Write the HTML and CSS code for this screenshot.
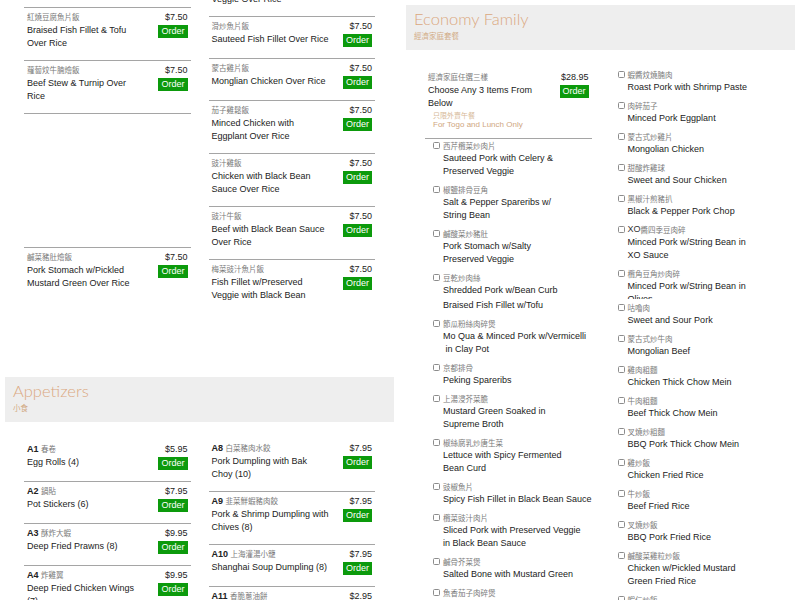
FILE: index.html
```html
<!DOCTYPE html>
<html lang="en">
<head>
<meta charset="utf-8">
<title>Menu</title>
<link rel="stylesheet" href="styles.css">
</head>
<body>
<div class="page">
  <div class="half">
    <section class="cat cont">
      <div class="cat-body">
        <div class="col">
          <div class="item"><div class="item-name"><span class="zh">蠔油牛肉燴飯</span><br>Beef with Oyster Sauce<br>Over Rice</div><div class="item-side"><span class="price">$7.50</span><button class="order">Order</button></div></div>
          <div class="item"><div class="item-name"><span class="zh">紅燒豆腐魚片飯</span><br>Braised Fish Fillet &amp; Tofu<br>Over Rice</div><div class="item-side"><span class="price">$7.50</span><button class="order">Order</button></div></div>
          <div class="item"><div class="item-name"><span class="zh">蘿蔔炆牛腩燴飯</span><br>Beef Stew &amp; Turnip Over<br>Rice</div><div class="item-side"><span class="price">$7.50</span><button class="order">Order</button></div></div>
          <div class="item blank"></div>
          <div class="item"><div class="item-name"><span class="zh">鹹菜豬肚燴飯</span><br>Pork Stomach w/Pickled<br>Mustard Green Over Rice</div><div class="item-side"><span class="price">$7.50</span><button class="order">Order</button></div></div>
        </div>
        <div class="col col-shift">
          <div class="item"><div class="item-name"><span class="zh">梅菜扣肉飯</span><br>Pork Belly w/Preserved<br>Veggie Over Rice</div><div class="item-side"><span class="price">$7.50</span><button class="order">Order</button></div></div>
          <div class="item"><div class="item-name"><span class="zh">滑炒魚片飯</span><br>Sauteed Fish Fillet Over Rice</div><div class="item-side"><span class="price">$7.50</span><button class="order">Order</button></div></div>
          <div class="item"><div class="item-name"><span class="zh">蒙古雞片飯</span><br>Monglian Chicken Over Rice</div><div class="item-side"><span class="price">$7.50</span><button class="order">Order</button></div></div>
          <div class="item"><div class="item-name"><span class="zh">茄子雞鬆飯</span><br>Minced Chicken with<br>Eggplant Over Rice</div><div class="item-side"><span class="price">$7.50</span><button class="order">Order</button></div></div>
          <div class="item"><div class="item-name"><span class="zh">豉汁雞飯</span><br>Chicken with Black Bean<br>Sauce Over Rice</div><div class="item-side"><span class="price">$7.50</span><button class="order">Order</button></div></div>
          <div class="item"><div class="item-name"><span class="zh">豉汁牛飯</span><br>Beef with Black Bean Sauce<br>Over Rice</div><div class="item-side"><span class="price">$7.50</span><button class="order">Order</button></div></div>
          <div class="item"><div class="item-name"><span class="zh">梅菜豉汁魚片飯</span><br>Fish Fillet w/Preserved<br>Veggie with Black Bean</div><div class="item-side"><span class="price">$7.50</span><button class="order">Order</button></div></div>
        </div>
      </div>
    </section>

    <section class="cat">
      <header class="cat-head">
        <h2 class="cat-title">Appetizers</h2>
        <div class="cat-sub">小食</div>
      </header>
      <div class="cat-body">
        <div class="col">
          <div class="item"><div class="item-name"><b class="code">A1</b> <span class="zh">春卷</span><br>Egg Rolls (4)</div><div class="item-side"><span class="price">$5.95</span><button class="order">Order</button></div></div>
          <div class="item"><div class="item-name"><b class="code">A2</b> <span class="zh">鍋貼</span><br>Pot Stickers (6)</div><div class="item-side"><span class="price">$7.95</span><button class="order">Order</button></div></div>
          <div class="item"><div class="item-name"><b class="code">A3</b> <span class="zh">酥炸大蝦</span><br>Deep Fried Prawns (8)</div><div class="item-side"><span class="price">$9.95</span><button class="order">Order</button></div></div>
          <div class="item"><div class="item-name"><b class="code">A4</b> <span class="zh">炸雞翼</span><br>Deep Fried Chicken Wings<br>(7)</div><div class="item-side"><span class="price">$9.95</span><button class="order">Order</button></div></div>
        </div>
        <div class="col col-up">
          <div class="item"><div class="item-name"><b class="code">A8</b> <span class="zh">白菜豬肉水餃</span><br>Pork Dumpling with Bak<br>Choy (10)</div><div class="item-side"><span class="price">$7.95</span><button class="order">Order</button></div></div>
          <div class="item"><div class="item-name"><b class="code">A9</b> <span class="zh">韭菜鮮蝦豬肉餃</span><br>Pork &amp; Shrimp Dumpling with<br>Chives (8)</div><div class="item-side"><span class="price">$7.95</span><button class="order">Order</button></div></div>
          <div class="item"><div class="item-name"><b class="code">A10</b> <span class="zh">上海灌湯小籠</span><br>Shanghai Soup Dumpling (8)</div><div class="item-side"><span class="price">$7.95</span><button class="order">Order</button></div></div>
          <div class="item"><div class="item-name"><b class="code">A11</b> <span class="zh">香脆蔥油餅</span><br>Scallion Pancake</div><div class="item-side"><span class="price">$2.95</span><button class="order">Order</button></div></div>
        </div>
      </div>
    </section>
  </div>

  <div class="half">
    <section class="cat">
      <header class="cat-head">
        <h2 class="cat-title">Economy Family</h2>
        <div class="cat-sub">經濟家庭套餐</div>
      </header>
      <div class="cat-body">
        <div class="col">
          <div class="item main">
            <div class="item-name"><span class="zh">經濟家庭任選三樣</span><br>Choose Any 3 Items From<br>Below
              <div class="note"><span class="zh">只限外賣午餐</span><br>For Togo and Lunch Only</div>
            </div>
            <div class="item-side"><span class="price">$28.95</span><button class="order">Order</button></div>
          </div>
          <div class="opt"><label class="opt-row"><input type="checkbox"><span class="zh">西芹欖菜炒肉片</span></label><div class="opt-en">Sauteed Pork with Celery &amp;<br>Preserved Veggie</div></div>
          <div class="opt"><label class="opt-row"><input type="checkbox"><span class="zh">椒鹽排骨豆角</span></label><div class="opt-en">Salt &amp; Pepper Spareribs w/<br>String Bean</div></div>
          <div class="opt"><label class="opt-row"><input type="checkbox"><span class="zh">鹹酸菜炒豬肚</span></label><div class="opt-en">Pork Stomach w/Salty<br>Preserved Veggie</div></div>
          <div class="opt"><label class="opt-row"><input type="checkbox"><span class="zh">豆乾炒肉絲</span></label><div class="opt-en">Shredded Pork w/Bean Curb</div><div class="opt-en extra">Braised Fish Fillet w/Tofu</div></div>
          <div class="opt"><label class="opt-row"><input type="checkbox"><span class="zh">節瓜粉絲肉碎煲</span></label><div class="opt-en">Mo Qua &amp; Minced Pork w/Vermicelli<br>&nbsp;in Clay Pot</div></div>
          <div class="opt"><label class="opt-row"><input type="checkbox"><span class="zh">京都排骨</span></label><div class="opt-en">Peking Spareribs</div></div>
          <div class="opt"><label class="opt-row"><input type="checkbox"><span class="zh">上湯浸芥菜膽</span></label><div class="opt-en">Mustard Green Soaked in<br>Supreme Broth</div></div>
          <div class="opt"><label class="opt-row"><input type="checkbox"><span class="zh">椒絲腐乳炒唐生菜</span></label><div class="opt-en">Lettuce with Spicy Fermented<br>Bean Curd</div></div>
          <div class="opt"><label class="opt-row"><input type="checkbox"><span class="zh">豉椒魚片</span></label><div class="opt-en">Spicy Fish Fillet in Black Bean Sauce</div></div>
          <div class="opt"><label class="opt-row"><input type="checkbox"><span class="zh">欖菜豉汁肉片</span></label><div class="opt-en">Sliced Pork with Preserved Veggie<br>in Black Bean Sauce</div></div>
          <div class="opt"><label class="opt-row"><input type="checkbox"><span class="zh">鹹骨芥菜煲</span></label><div class="opt-en">Salted Bone with Mustard Green</div></div>
          <div class="opt"><label class="opt-row"><input type="checkbox"><span class="zh">魚香茄子肉碎煲</span></label><div class="opt-en">Eggplant w/Minced Pork in Clay Pot</div></div>
        </div>
        <div class="col">
          <div class="opt"><label class="opt-row"><input type="checkbox"><span class="zh">蝦醬炆燒腩肉</span></label><div class="opt-en">Roast Pork with Shrimp Paste</div></div>
          <div class="opt"><label class="opt-row"><input type="checkbox"><span class="zh">肉碎茄子</span></label><div class="opt-en">Minced Pork Eggplant</div></div>
          <div class="opt"><label class="opt-row"><input type="checkbox"><span class="zh">蒙古式炒雞片</span></label><div class="opt-en">Mongolian Chicken</div></div>
          <div class="opt"><label class="opt-row"><input type="checkbox"><span class="zh">甜酸炸雞球</span></label><div class="opt-en">Sweet and Sour Chicken</div></div>
          <div class="opt"><label class="opt-row"><input type="checkbox"><span class="zh">黑椒汁煎豬扒</span></label><div class="opt-en">Black &amp; Pepper Pork Chop</div></div>
          <div class="opt"><label class="opt-row"><input type="checkbox"><span class="lat">XO</span><span class="zh">醬四季豆肉碎</span></label><div class="opt-en">Minced Pork w/String Bean in<br>XO Sauce</div></div>
          <div class="opt clip"><label class="opt-row"><input type="checkbox"><span class="zh">欖角豆角炒肉碎</span></label><div class="opt-en">Minced Pork w/String Bean in<br>Olives</div></div>
          <div class="opt"><label class="opt-row"><input type="checkbox"><span class="zh">咕嚕肉</span></label><div class="opt-en">Sweet and Sour Pork</div></div>
          <div class="opt"><label class="opt-row"><input type="checkbox"><span class="zh">蒙古式炒牛肉</span></label><div class="opt-en">Mongolian Beef</div></div>
          <div class="opt"><label class="opt-row"><input type="checkbox"><span class="zh">雞肉粗麵</span></label><div class="opt-en">Chicken Thick Chow Mein</div></div>
          <div class="opt"><label class="opt-row"><input type="checkbox"><span class="zh">牛肉粗麵</span></label><div class="opt-en">Beef Thick Chow Mein</div></div>
          <div class="opt"><label class="opt-row"><input type="checkbox"><span class="zh">叉燒炒粗麵</span></label><div class="opt-en">BBQ Pork Thick Chow Mein</div></div>
          <div class="opt"><label class="opt-row"><input type="checkbox"><span class="zh">雞炒飯</span></label><div class="opt-en">Chicken Fried Rice</div></div>
          <div class="opt"><label class="opt-row"><input type="checkbox"><span class="zh">牛炒飯</span></label><div class="opt-en">Beef Fried Rice</div></div>
          <div class="opt"><label class="opt-row"><input type="checkbox"><span class="zh">叉燒炒飯</span></label><div class="opt-en">BBQ Pork Fried Rice</div></div>
          <div class="opt"><label class="opt-row"><input type="checkbox"><span class="zh">鹹酸菜雞粒炒飯</span></label><div class="opt-en">Chicken w/Pickled Mustard<br>Green Fried Rice</div></div>
          <div class="opt"><label class="opt-row"><input type="checkbox"><span class="zh">蝦仁炒飯</span></label><div class="opt-en">Shrimp Fried Rice</div></div>
        </div>
      </div>
    </section>
  </div>
</div>
</body>
</html>
```

FILE: styles.css
```css
html, body {
  margin: 0;
  background: #fff;
}
body {
  font-family: "Liberation Sans", Arial, sans-serif;
  font-size: 9px;
  line-height: 13px;
  color: #222;
}
.page {
  display: grid;
  grid-template-columns: 1fr 1fr;
  column-gap: 12px;
  padding: 0 5px;
  align-items: start;
}
.cat {
  margin-top: 5px;
}
.cat.cont {
  margin-top: -45px;
}
.cat-head {
  background: #eeeeee;
  height: 45px;
  box-sizing: border-box;
  padding: 4px 8px 0;
}
.cat-title {
  margin: 0;
  font-family: Lato, "Open Sans", sans-serif;
  font-weight: 300;
  font-size: 16.5px;
  line-height: 21px;
  color: #dba880;
}
.cat-sub {
  font-family: "Noto Sans CJK TC", "Noto Sans CJK SC", sans-serif;
  font-size: 7.5px;
  line-height: 12px;
  color: #d2ab85;
}
.zh {
  font-family: "Noto Sans CJK TC", "Noto Sans CJK SC", sans-serif;
  font-size: 7.5px;
  line-height: 9px;
  color: #7a7a7a;
}
.cat-body {
  display: grid;
  grid-template-columns: 1fr 1fr;
  column-gap: 18px;
  padding: 18px 19px 0;
  align-items: start;
}
.cont .cat-body {
  padding: 0 19px 60px;
}
.col-shift {
  padding-top: 9px;
}
.col-up {
  margin-top: -1px;
}
.item {
  display: flex;
  justify-content: space-between;
  padding: 3px 3px 10px;
  border-top: 1px solid #a5a5a5;
}
.item:first-child {
  border-top: none;
}
.item.blank {
  height: 134px;
  padding: 0;
  box-sizing: border-box;
}
.item-name {
  white-space: nowrap;
}
.code {
  font-weight: bold;
}
.item-side {
  display: flex;
  flex-direction: column;
  align-items: flex-end;
  min-height: 28px;
}
.price {
  line-height: 13px;
}
.order {
  margin: 1px 0 0;
  padding: 0 3px;
  border: none;
  border-radius: 0;
  background: #0c9a0c;
  color: #fff;
  font: inherit;
  line-height: 13px;
  cursor: pointer;
}
.item.main {
  border-bottom: 1px solid #a5a5a5;
  padding-bottom: 9px;
}
.note {
  margin: 1px 0 0 5px;
  font-size: 8px;
  line-height: 9px;
  color: #cfa67f;
}
.note .zh {
  color: #d6b896;
  font-size: 7px;
  line-height: 8px;
}
.opt {
  margin-bottom: 5px;
}
.opt.clip {
  height: 32px;
  overflow: hidden;
  margin-bottom: 2px;
}
.opt-row {
  display: flex;
  align-items: center;
  gap: 3px;
  height: 13px;
  padding-left: 8px;
}
.opt-row input {
  appearance: none;
  -webkit-appearance: none;
  width: 7px;
  height: 7px;
  margin: 0;
  box-sizing: border-box;
  border: 1px solid #8c8c8c;
  border-radius: 1.5px;
  background: #fff;
}
.lat {
  font-size: 9px;
  color: #333;
}
.opt-row .lat + .zh {
  margin-left: -3px;
}
.opt-en {
  padding-left: 18px;
  white-space: nowrap;
}
.opt-en.extra {
  margin-top: 2px;
}
```
